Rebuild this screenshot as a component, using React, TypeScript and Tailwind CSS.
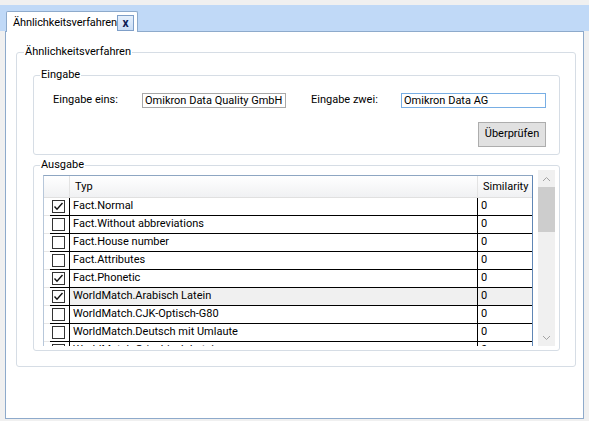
import React from "react";

type Row = { name: string; checked: boolean; selected?: boolean };

const rows: Row[] = [
  { name: "Fact.Normal", checked: true },
  { name: "Fact.Without abbreviations", checked: false },
  { name: "Fact.House number", checked: false },
  { name: "Fact.Attributes", checked: false },
  { name: "Fact.Phonetic", checked: true },
  { name: "WorldMatch.Arabisch Latein", checked: true, selected: true },
  { name: "WorldMatch.CJK-Optisch-G80", checked: false },
  { name: "WorldMatch.Deutsch mit Umlaute", checked: false },
  { name: "WorldMatch.Griechisch Latein", checked: false },
];

function CheckBox({ checked }: { checked: boolean }) {
  return (
    <div className="w-[13px] h-[13px] border border-[#333333] bg-white flex items-center justify-center">
      {checked && (
        <svg width="11" height="11" viewBox="0 0 11 11">
          <polyline points="1.5,5.5 4,8.2 9.5,2" fill="none" stroke="#111" strokeWidth="1.4" />
        </svg>
      )}
    </div>
  );
}

function TableRow({ row }: { row: Row }) {
  const sel = row.selected ? "bg-[#f0f0f0]" : "bg-white";
  return (
    <div className="flex h-[18px] shrink-0">
      <div className="w-[6px] h-full border-b border-[#e6e6e6] bg-white" />
      <div className="w-[20px] h-full border-b border-r border-black bg-white pl-[2px] pt-[2px]">
        <CheckBox checked={row.checked} />
      </div>
      <div className={`w-[408px] h-full border-b border-r border-black ${sel} pl-[3px] leading-[16px] whitespace-nowrap overflow-hidden text-black`}>
        {row.name}
      </div>
      <div className={`w-[54px] h-full border-b border-black ${sel} pl-[3px] leading-[16px] text-black`}>0</div>
    </div>
  );
}

export default function App() {
  return (
    <div className="w-[589px] h-[421px] bg-[#f0f0f0] overflow-hidden flex flex-col font-['Roboto',sans-serif] text-[11px] text-black">
      <div className="h-[5px] shrink-0" />
      {/* tab strip */}
      <div className="h-[26px] shrink-0 bg-[#c0d9f7] flex items-end pl-[6px]">
        <div className="relative z-10 -mb-px h-[21px] bg-white border border-b-0 border-[#8eaacb] rounded-t-[2px] flex items-center pl-[6px] pr-[3px]">
          <span className="leading-[14px] mt-[2px] tracking-[-0.1px]">Ähnlichkeitsverfahren</span>
          <div className="mt-[2px] w-[17px] h-[16px] border border-[#7f9fc8] bg-gradient-to-b from-[#e6f0fc] to-[#c9ddf6] flex items-center justify-center font-bold text-[12px] leading-none text-[#0d1d55]">
            x
          </div>
        </div>
      </div>
      {/* panel */}
      <div className="mx-[5px] h-[388px] shrink-0 border border-[#8eaacb] bg-white flex flex-col">
        <fieldset className="ml-[10px] mt-[13px] w-[560px] h-[322px] border border-[#d6dde5] rounded-[3px] flex flex-col">
          <legend className="ml-[7px] px-[1px] leading-[14px]">Ähnlichkeitsverfahren</legend>
          {/* Eingabe */}
          <fieldset className="ml-[16px] mt-[9px] w-[527px] h-[87px] border border-[#d6dde5] rounded-[3px] flex flex-col">
            <legend className="ml-[6px] px-[1px] leading-[14px]">Eingabe</legend>
            <div className="mt-[10px] flex items-center pl-[19px]">
              <div className="w-[89px]">Eingabe eins:</div>
              <div className="w-[144px] h-[15px] border border-[#a8a8a8] pl-[2px] leading-[13px] whitespace-nowrap overflow-hidden">
                Omikron Data Quality GmbH
              </div>
              <div className="ml-[25px] w-[90px]">Eingabe zwei:</div>
              <div className="w-[145px] h-[15px] border border-[#78aee4] pl-[2px] leading-[13px] whitespace-nowrap overflow-hidden">
                Omikron Data AG
              </div>
            </div>
            <div className="mt-[13px] flex justify-end pr-[13px]">
              <div className="w-[68px] h-[25px] bg-[#e1e1e1] border border-[#adadad] flex items-center justify-center">
                Überprüfen
              </div>
            </div>
          </fieldset>
          {/* Ausgabe */}
          <fieldset className="ml-[16px] mt-[3px] w-[527px] h-[193px] border border-[#d6dde5] rounded-[3px] flex flex-col">
            <legend className="ml-[6px] px-[1px] leading-[14px]">Ausgabe</legend>
            <div className="-mt-[2px] ml-[9px] flex items-start">
              {/* table */}
              <div className="mt-[5px] w-[490px] h-[171px] overflow-hidden border-t border-l border-r border-t-[#8ea6c2] border-l-[#b7c7da] border-r-[#5f86b5] flex flex-col">
                <div className="flex h-[22px] shrink-0 bg-gradient-to-b from-[#ffffff] to-[#f0f1f3] border-b border-[#e0e0e0]">
                  <div className="w-[6px] h-full" />
                  <div className="w-[20px] h-full border-r border-[#e3e3e3]" />
                  <div className="w-[408px] h-full border-r border-[#e3e3e3] pl-[5px] leading-[21px]">Typ</div>
                  <div className="w-[54px] h-full pl-[5px] leading-[21px]">Similarity</div>
                </div>
                {rows.map((r) => (
                  <TableRow key={r.name} row={r} />
                ))}
              </div>
              {/* scrollbar */}
              <div className="ml-[5px] w-[17px] h-[176px] bg-[#f0f0f0] flex flex-col">
                <div className="h-[17px] flex items-center justify-center">
                  <svg width="9" height="6" viewBox="0 0 9 6">
                    <polyline points="1,5 4.5,1.5 8,5" fill="none" stroke="#a3a3a3" strokeWidth="1" />
                  </svg>
                </div>
                <div className="h-[45px] bg-[#cdcdcd]" />
                <div className="flex-1" />
                <div className="h-[17px] flex items-center justify-center">
                  <svg width="9" height="6" viewBox="0 0 9 6">
                    <polyline points="1,1 4.5,4.5 8,1" fill="none" stroke="#a3a3a3" strokeWidth="1" />
                  </svg>
                </div>
              </div>
            </div>
          </fieldset>
        </fieldset>
      </div>
    </div>
  );
}
